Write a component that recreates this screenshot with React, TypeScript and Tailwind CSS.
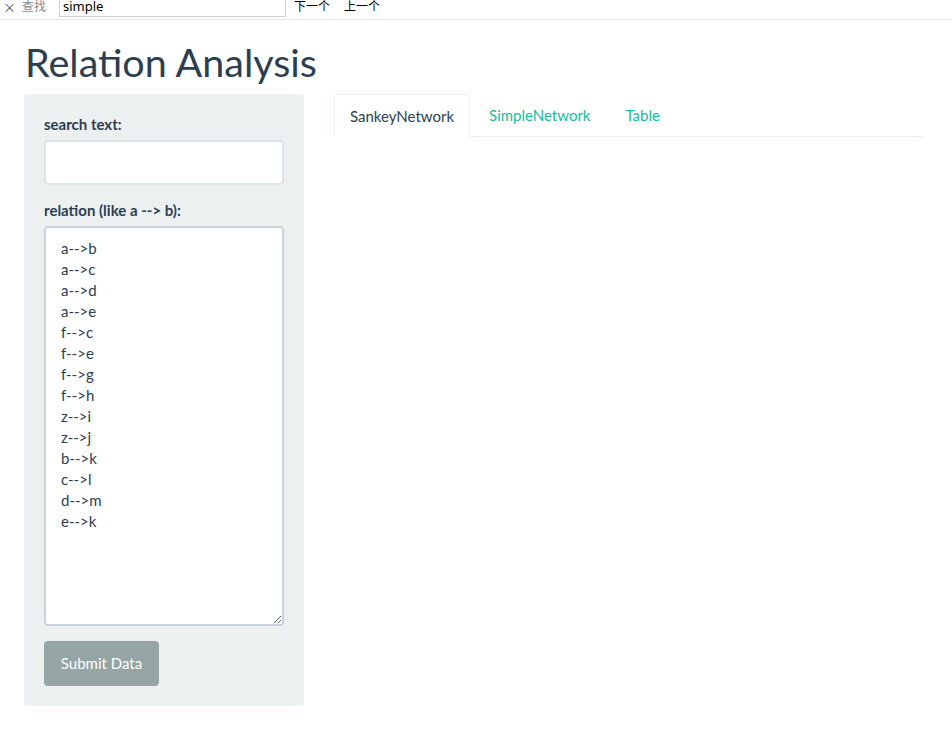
import React from "react";

const relations = [
  "a-->b",
  "a-->c",
  "a-->d",
  "a-->e",
  "f-->c",
  "f-->e",
  "f-->g",
  "f-->h",
  "z-->i",
  "z-->j",
  "b-->k",
  "c-->l",
  "d-->m",
  "e-->k",
].join("\n");

export default function App() {
  return (
    <div className="min-h-[745px] w-[952px] bg-white text-[#2c3e50]" style={{ fontFamily: "Lato, 'Noto Sans', sans-serif" }}>
      {/* find bar */}
      <div className="h-[20px] overflow-hidden border-b border-[#e5e5e5]" style={{ fontFamily: "'Noto Sans CJK SC', 'Noto Sans', sans-serif" }}>
        <div className="-mt-[5px] flex h-[22px] items-center text-[12px] leading-none">
          <span className="ml-[3px] w-[10px] text-[13px] text-[#555]">×</span>
          <span className="ml-[9px] text-[#888]">查找</span>
          <div className="ml-[13px] flex h-[22px] w-[227px] items-center border border-[#cfcfcf] pl-[3px] pt-[1px] text-[13px] text-black" style={{ fontFamily: "'Noto Sans', sans-serif" }}>
            simple
          </div>
          <span className="ml-[8px] text-black">下一个</span>
          <span className="ml-[14px] text-black">上一个</span>
        </div>
      </div>

      <div className="pl-[24px] pr-[28px]">
        <h1 className="ml-[1px] mt-[20px] mb-[11px] text-[39.5px] font-normal leading-[43px]">Relation Analysis</h1>

        <div className="flex">
          <div className="w-[280px] shrink-0 rounded-[4px] bg-[#ecf0f1] p-[20px]">
            <label className="mb-[5px] block text-[15px] font-bold leading-[21px]">search text:</label>
            <div className="h-[45px] w-[240px] rounded-[4px] border-2 border-[#dce4ec] bg-white"></div>
            <label className="mt-[15px] mb-[5px] block text-[15px] font-bold leading-[21px]">relation (like a --&gt; b):</label>
            <textarea
              readOnly
              value={relations}
              className="block h-[400px] w-[240px] resize-y rounded-[4px] border-2 border-[#c9d2db] bg-white px-[15px] py-[10px] text-[15px] leading-[21px] text-[#2c3e50] outline-none"
              style={{ fontFamily: "Lato, sans-serif" }}
            />
            <button className="mt-[15px] h-[45px] w-[115px] rounded-[4px] bg-[#95a5a6] text-[15px] text-white">
              Submit Data
            </button>
          </div>

          <div className="ml-[30px] flex-1">
            <div className="flex h-[43px] border-b border-[#ecf0f1]">
              <div className="-mb-px flex h-[43px] items-center rounded-t-[4px] border border-b-white border-[#ecf0f1] bg-white px-[15px] pt-[1px] text-[15px] leading-[21px] text-[#2c3e50]">
                SankeyNetwork
              </div>
              <div className="ml-[4px] flex items-center px-[15px] pt-[1px] text-[15px] text-[#18bc9c]">SimpleNetwork</div>
              <div className="ml-[5px] flex items-center px-[15px] pt-[1px] text-[15px] text-[#18bc9c]">Table</div>
            </div>
          </div>
        </div>
      </div>
    </div>
  );
}
